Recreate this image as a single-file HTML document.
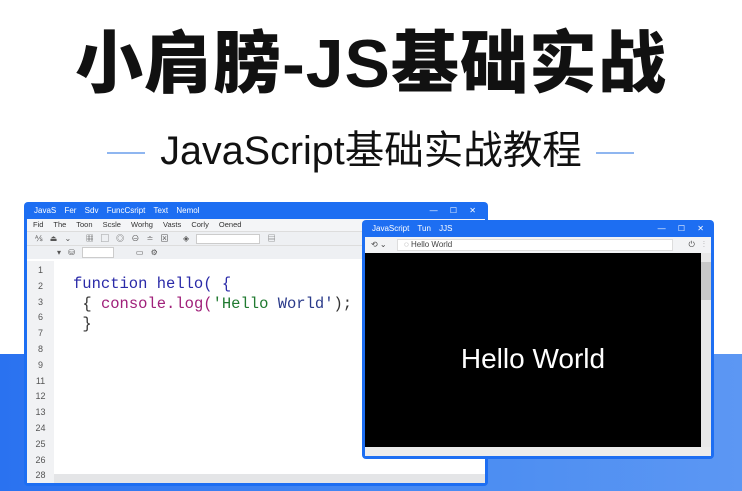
<!DOCTYPE html><html><head><meta charset="utf-8"><style>
*{margin:0;padding:0;box-sizing:border-box}
body{width:742px;height:491px;overflow:hidden;background:#fff;position:relative;font-family:"Liberation Sans","Noto Sans CJK SC",sans-serif}
.band{position:absolute;left:0;top:354px;width:742px;height:137px;background:linear-gradient(90deg,#2a72f0,#4a8cf2 60%,#5c97f3)}
.t1{position:absolute;top:24px;left:0;width:742px;text-align:center;font-size:68px;font-weight:900;color:#111;letter-spacing:1px;line-height:80px}
.t2{position:absolute;top:128px;left:0;width:742px;text-align:center;font-size:39.5px;color:#111;line-height:46px}
.ln{position:absolute;top:152px;height:2px;width:38px;background:#8fb6f0}
.win{position:absolute;background:#1d6ef2;border-radius:4px}
.tb{color:#fff;font-size:8px;height:17px;line-height:17px;padding-left:10px;word-spacing:6px}
.menu{background:#f4f5f7;font-size:7.5px;color:#333;height:12px;line-height:12px;padding-left:6px;word-spacing:8px}
.tool{background:#eef0f3;height:14px;border-top:1px solid #ddd;font-size:8px;color:#555;line-height:13px;padding-left:8px;word-spacing:5px}
.code{position:absolute;font-family:"Liberation Mono",monospace;font-size:15.5px;line-height:20px;color:#2a2aa8}
.gut{position:absolute;left:3px;top:60px;width:27px;height:216px;background:#f1f2f4;font-size:9px;color:#555;text-align:center;line-height:15.8px;padding-top:2px}
</style></head><body>
<div class="band"></div>
<div class="t1">小肩膀-JS基础实战</div>
<div class="ln" style="left:107px"></div><div class="ln" style="left:596px"></div>
<div class="t2">JavaScript基础实战教程</div>

<div class="win" style="left:24px;top:202px;width:464px;height:284px">
 <div class="tb">JavaS Fer Sdv FuncCsript Text Nemol<span style="position:absolute;right:12px;word-spacing:10px">— ☐ ✕</span></div>
 <div style="position:absolute;left:3px;top:17px;right:3px;bottom:3px;background:#fff">
  <div class="menu">Fid The Toon Scsle Worhg Vasts Corly Oened</div>
  <div class="tool">⅍ ⏏ ⌄ &nbsp;▦ ▢ ◎ ⊖ ≐ ⊠ &nbsp;◈ <span style="display:inline-block;width:64px;height:10px;background:#fff;border:1px solid #ccc;vertical-align:middle"></span> ▤</div>
  <div class="tool" style="padding-left:30px">▾ ⛁ <span style="display:inline-block;width:32px;height:11px;background:#fff;border:1px solid #ccc;vertical-align:middle"></span> &nbsp; ▭ ⚙</div>
  <div class="gut" style="top:42px;left:0;height:222px">1<br>2<br>3<br>6<br>7<br>8<br>9<br>11<br>12<br>13<br>24<br>25<br>26<br>28</div>
  <div class="code" style="left:46px;top:55px"><span>function hello( {</span><br>&nbsp;<span style="color:#333">{</span> <span style="color:#a0207a">console.log(</span><span style="color:#207a30">'Hello</span> <span style="color:#2a3a8a">World'</span><span style="color:#333">);</span><br>&nbsp;<span style="color:#333">}</span></div>
  <div style="position:absolute;left:27px;right:0;bottom:0;height:9px;background:#e4e5e7"></div>
 </div>
</div>

<div class="win" style="left:362px;top:220px;width:352px;height:239px">
 <div class="tb" style="height:17px">JavaScript Tun JJS<span style="position:absolute;right:10px;word-spacing:10px">— ☐ ✕</span></div>
 <div style="position:absolute;left:3px;top:17px;right:3px;bottom:3px;background:#000">
  <div style="height:16px;background:#f2f3f5;font-size:8px;color:#444;line-height:16px;padding-left:6px;position:relative">⟲ ⌄<div style="position:absolute;left:32px;top:2px;width:276px;height:12px;background:#fff;border:1px solid #ddd;line-height:10px;padding-left:6px">◌ Hello World</div><span style="position:absolute;right:6px;word-spacing:6px">⏻ ⋮</span></div>
  <div style="position:absolute;right:0;top:16px;width:10px;bottom:9px;background:#e8e8e8"><div style="margin-top:9px;height:38px;background:#c8c8c8"></div></div>
  <div style="position:absolute;left:0;right:0;bottom:0;height:9px;background:#ececec"></div>
  <div style="position:absolute;left:0;right:10px;top:106px;text-align:center;color:#fff;font-size:28px">Hello World</div>
 </div>
</div>
</body></html>
